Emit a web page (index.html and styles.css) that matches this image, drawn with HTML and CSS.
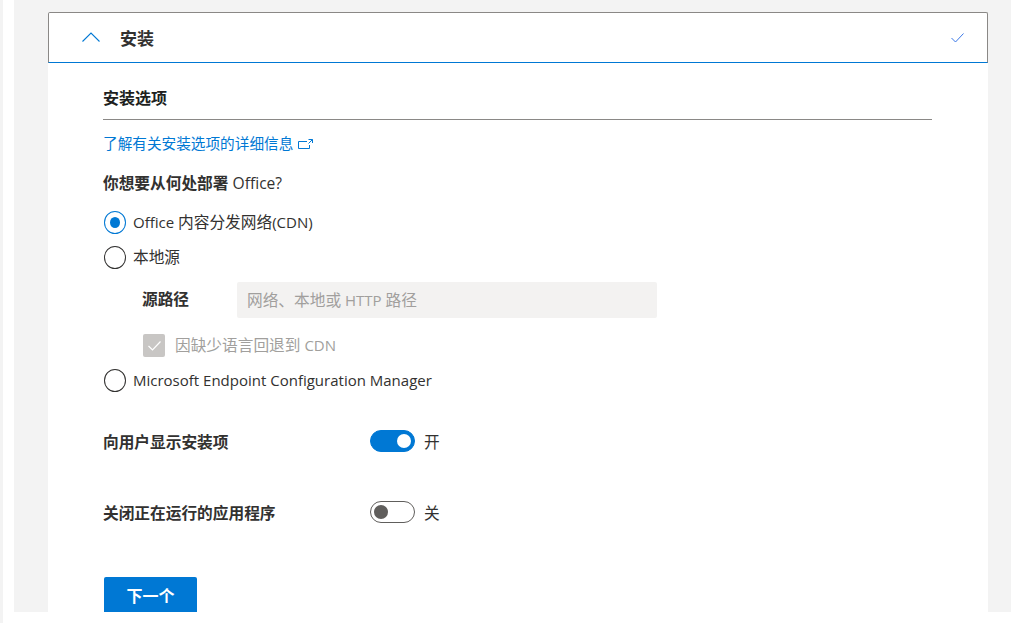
FILE: index.html
```html
<!DOCTYPE html>
<html lang="zh-CN">
<head>
<meta charset="utf-8">
<title>安装</title>
<link rel="stylesheet" href="styles.css">
</head>
<body>
<div class="strip"></div>
<main class="canvas">
  <section class="card">
    <header class="card-head">
      <svg class="chevron" width="18" height="10" viewBox="0 0 18 10"><path d="M0.5 9.5 L9 1 L17.5 9.5" fill="none" stroke="#0078d4" stroke-width="1.1"/></svg>
      <h2 class="card-title">安装</h2>
      <svg class="check" width="13" height="10" viewBox="0 0 13 10"><path d="M0.5 5 L4.5 9 L12.5 0.5" fill="none" stroke="#3b78e7" stroke-width="1"/></svg>
    </header>
    <div class="card-body">
      <h3 class="section-title">安装选项</h3>
      <a class="link" href="#">了解有关安装选项的详细信息
        <svg class="ext" width="15" height="10" viewBox="0 0 15 10"><path d="M9 2.5H0.5V9.5H11.5V6M10.5 0.5H14.5V4M14.5 0.5L10.5 4.5" fill="none" stroke="#0078d4" stroke-width="1"/></svg>
      </a>
      <p class="question">你想要从何处部署 <span class="latin-q">Office?</span></p>
      <div class="radio-row"><span class="radio on"></span><span><span class="latin">Office </span>内容分发网络<span class="latin">(CDN)</span></span></div>
      <div class="radio-row"><span class="radio"></span><span>本地源</span></div>
      <div class="source-row">
        <span class="source-label">源路径</span>
        <div class="source-input">网络、本地或<span class="latin"> HTTP </span>路径</div>
      </div>
      <div class="check-row">
        <span class="checkbox"><svg width="13" height="10" viewBox="0 0 13 10"><path d="M0.5 5 L4.5 9 L12.5 0.5" fill="none" stroke="#fff" stroke-width="1.2"/></svg></span>
        <span class="check-label">因缺少语言回退到<span class="latin"> CDN</span></span>
      </div>
      <div class="radio-row"><span class="radio"></span><span class="latin">Microsoft Endpoint Configuration Manager</span></div>
      <div class="toggle-row first">
        <span class="toggle-label">向用户显示安装项</span>
        <span class="toggle on"><span class="knob"></span></span>
        <span>开</span>
      </div>
      <div class="toggle-row">
        <span class="toggle-label">关闭正在运行的应用程序</span>
        <span class="toggle"><span class="knob"></span></span>
        <span>关</span>
      </div>
      <button class="next" type="button">下一个</button>
    </div>
  </section>
</main>
</body>
</html>
```
FILE: styles.css
```css
* { box-sizing: border-box; }
html, body { margin: 0; height: 625px; overflow: hidden; background: #fff; }
body {
  display: flex;
  align-items: flex-start;
  font-family: "Open Sans", "Noto Sans CJK SC", sans-serif;
  font-size: 15.7px;
  color: #323130;
}
.latin { font-size: 15px; }
.latin-q { font-size: 15.6px; font-weight: 500; }
.strip { width: 3px; height: 623px; background: #f3f3f3; margin-right: 11px; flex: none; }
.canvas {
  width: 997px;
  height: 612px;
  background: #f3f3f3;
  padding: 12px 23px 0 34px;
  flex: none;
}
.card { background: #fff; height: 600px; }
.card-head {
  height: 51px;
  border: 1px solid #8a8886;
  border-bottom: 1px solid #0078d4;
  border-radius: 2px 2px 0 0;
  display: flex;
  align-items: center;
  padding: 0 23px 0 33px;
}
.chevron { flex: none; margin-right: 20px; margin-top: -1px; }
.card-title { margin: 0; font-size: 17px; font-weight: 700; flex: 1; }
.check { flex: none; margin-top: 1px; }
.card-body { padding: 25px 56px 0 55px; }
.section-title {
  margin: 0;
  font-size: 16px;
  line-height: 20px;
  height: 32px;
  font-weight: 700;
  color: #201f1e;
  border-bottom: 1px solid #8a8886;
}
.link {
  display: flex;
  align-items: center;
  gap: 5px;
  margin-top: 13px;
  line-height: 20px;
  font-size: 14.65px;
  color: #0078d4;
  text-decoration: none;
}
.ext { flex: none; margin-top: 2px; }
.question { margin: 20px 0 0; line-height: 20px; font-weight: 700; }
.radio-row {
  display: flex;
  align-items: center;
  gap: 7px;
  height: 25px;
  margin: 10px 0 0 1px;
}
.question + .radio-row { margin-top: 16px; }
.radio {
  width: 22px;
  height: 23px;
  border: 1px solid #323130;
  border-radius: 50%;
  flex: none;
  align-self: flex-end;
  position: relative;
}
.radio.on { border-color: #0078d4; }
.radio.on::after {
  content: "";
  position: absolute;
  inset: 5px;
  border-radius: 50%;
  background: #0078d4;
}
.source-row {
  display: flex;
  align-items: center;
  margin: 13px 0 0 39px;
}
.source-label { width: 95px; font-weight: 700; margin-top: -4px; }
.source-input {
  width: 420px;
  height: 36px;
  line-height: 36px;
  padding-left: 10px;
  background: #f3f2f1;
  border-radius: 2px;
  color: #a19f9d;
}
.check-row {
  display: flex;
  align-items: center;
  gap: 10px;
  margin: 16px 0 0 40px;
  height: 23px;
  color: #a19f9d;
}
.check-label { margin-top: -2px; }
.checkbox {
  width: 22px;
  height: 23px;
  background: #c8c6c4;
  border-radius: 2px;
  display: flex;
  align-items: center;
  justify-content: center;
}
.toggle-row {
  display: flex;
  align-items: center;
  height: 22px;
  margin-top: 49px;
}
.toggle-row.first { margin-top: 38px; }
.toggle-label { width: 267px; font-weight: 700; }
.toggle {
  width: 45px;
  height: 22px;
  border: 1px solid #605e5c;
  border-radius: 11px;
  margin-right: 9px;
  padding: 0 3px;
  display: flex;
  align-items: center;
}
.toggle .knob { width: 14px; height: 14px; border-radius: 50%; background: #605e5c; }
.toggle.on { background: #0078d4; border-color: #0078d4; justify-content: flex-end; }
.toggle.on .knob { background: #fff; }
.next {
  display: block;
  width: 93px;
  height: 35px;
  margin: 54px 0 0 1px;
  border: 0;
  border-radius: 2px 2px 0 0;
  background: #0078d4;
  color: #fff;
  font: 700 16px "Open Sans", "Noto Sans CJK SC", sans-serif;
}
```
